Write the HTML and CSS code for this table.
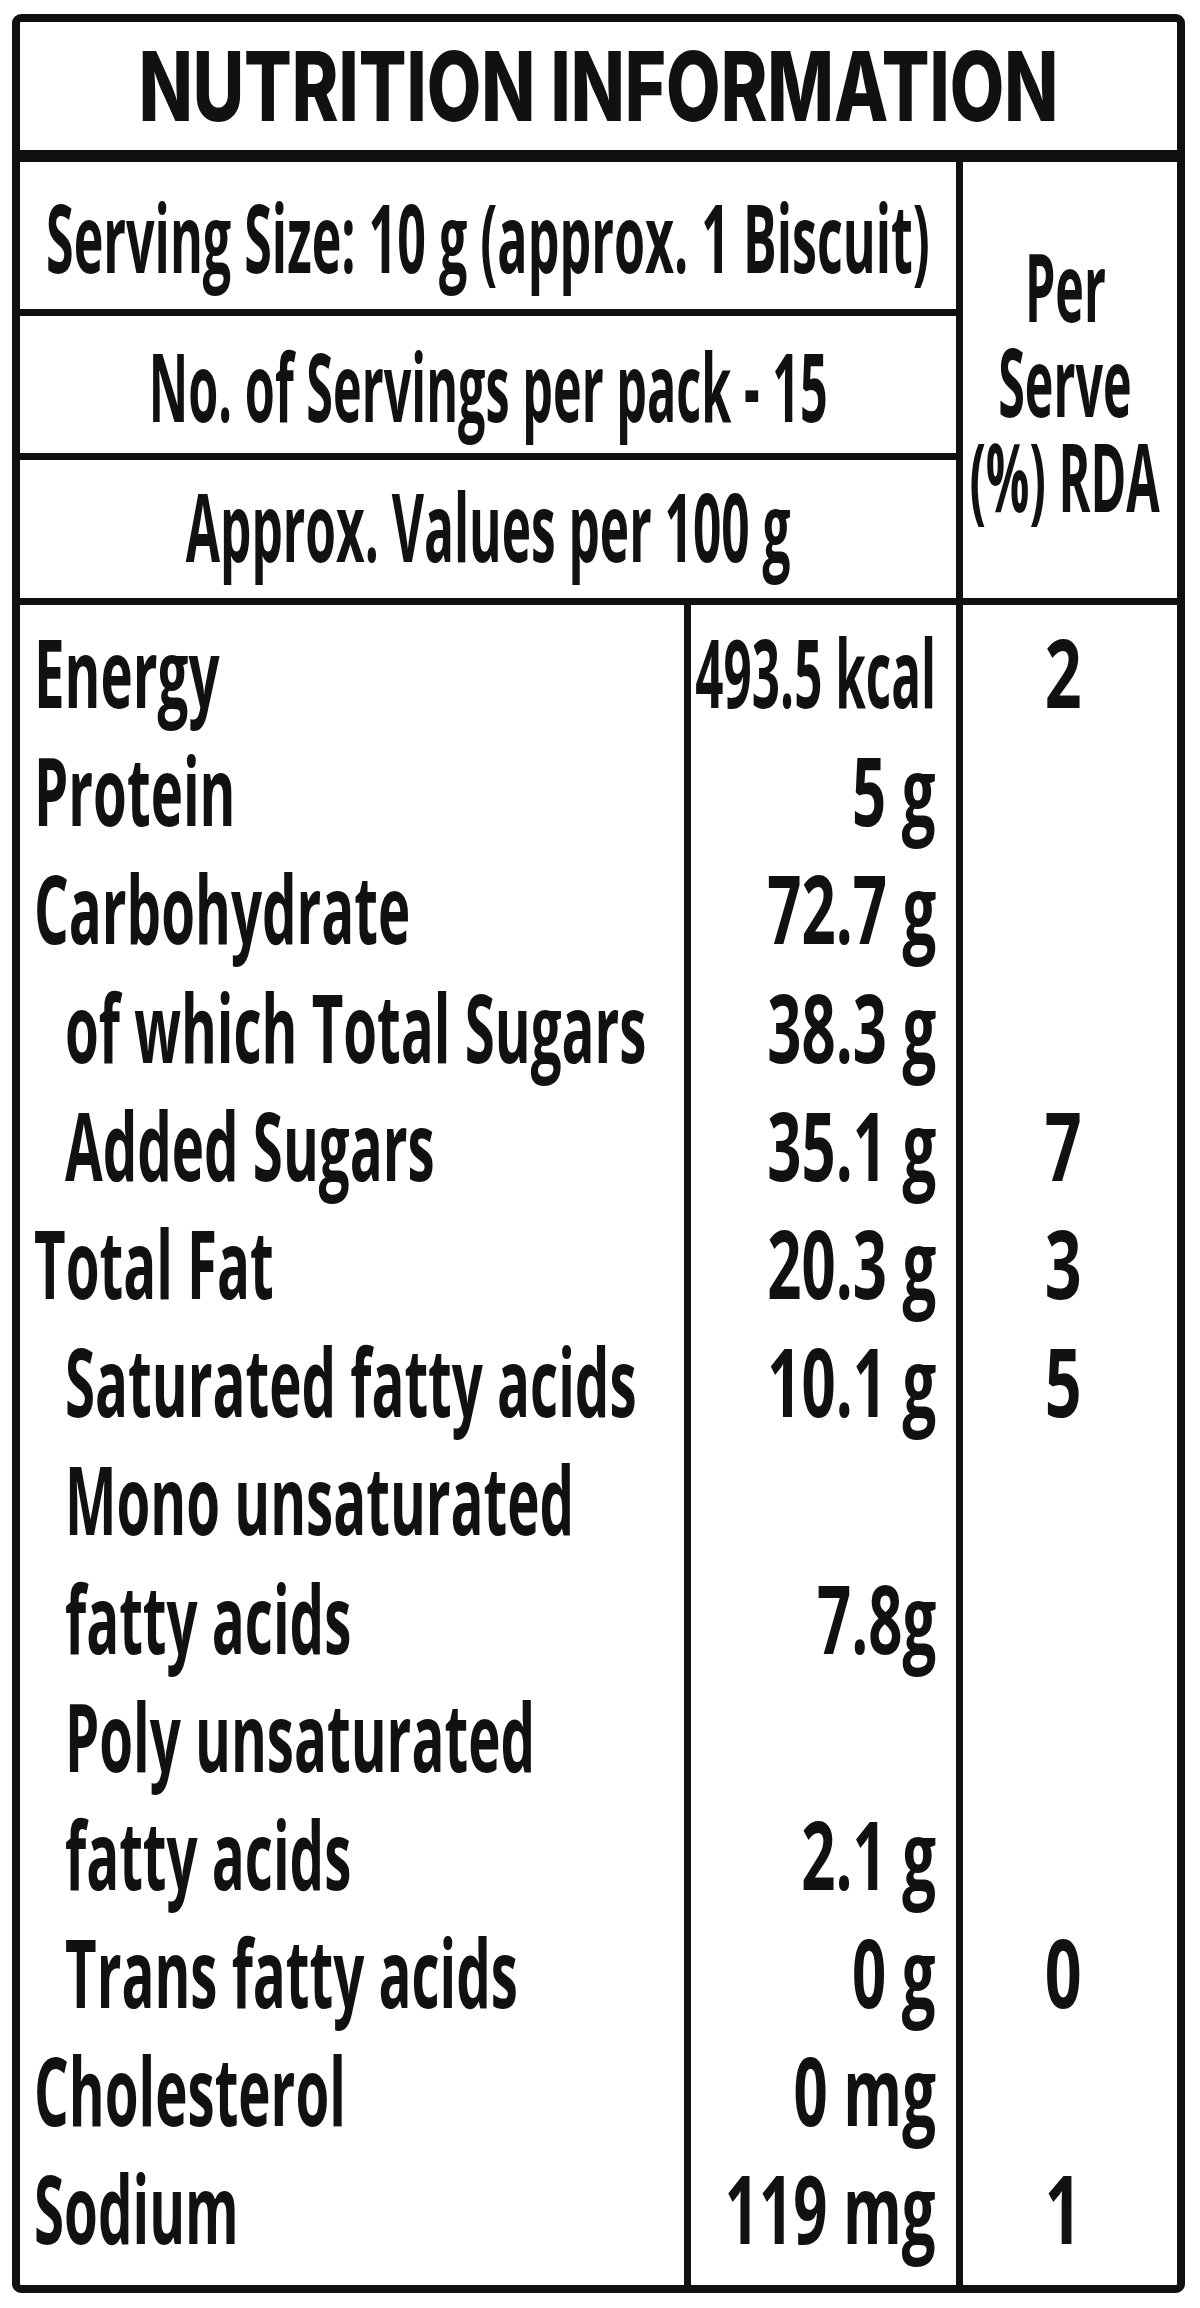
FILE: index.html
```html
<!DOCTYPE html>
<html lang="en">
<head>
<meta charset="utf-8">
<title>Nutrition Information</title>
<link rel="stylesheet" href="styles.css">
</head>
<body>
<div class="label">
  <div class="title"><span class="title-text">NUTRITION INFORMATION</span></div>
  <div class="head">
    <div class="head-left">
      <div class="hrow hrow-1"><span class="tx tx-h">Serving Size: 10 g (approx. 1 Biscuit)</span></div>
      <div class="hrow hrow-2"><span class="tx tx-h">No. of Servings per pack - 15</span></div>
      <div class="hrow hrow-3"><span class="tx tx-h">Approx. Values per 100 g</span></div>
    </div>
    <div class="head-right">
      <div class="rda-line"><span class="tx tx-rda-head">Per</span></div>
      <div class="rda-line"><span class="tx tx-rda-head">Serve</span></div>
      <div class="rda-line"><span class="tx tx-rda-head">(%) RDA</span></div>
    </div>
  </div>
  <div class="facts">
    <div class="c n"><span class="tx">Energy</span></div>
    <div class="c v"><span class="tx tx-tight">493.5 kcal</span></div>
    <div class="c p"><span class="tx">2</span></div>

    <div class="c n"><span class="tx">Protein</span></div>
    <div class="c v"><span class="tx">5 g</span></div>
    <div class="c p"></div>

    <div class="c n"><span class="tx">Carbohydrate</span></div>
    <div class="c v"><span class="tx">72.7 g</span></div>
    <div class="c p"></div>

    <div class="c n ind"><span class="tx">of which Total Sugars</span></div>
    <div class="c v"><span class="tx">38.3 g</span></div>
    <div class="c p"></div>

    <div class="c n ind"><span class="tx">Added Sugars</span></div>
    <div class="c v"><span class="tx">35.1 g</span></div>
    <div class="c p"><span class="tx">7</span></div>

    <div class="c n"><span class="tx">Total Fat</span></div>
    <div class="c v"><span class="tx">20.3 g</span></div>
    <div class="c p"><span class="tx">3</span></div>

    <div class="c n ind"><span class="tx">Saturated fatty acids</span></div>
    <div class="c v"><span class="tx">10.1 g</span></div>
    <div class="c p"><span class="tx">5</span></div>

    <div class="c n ind"><span class="tx">Mono unsaturated</span></div>
    <div class="c v"></div>
    <div class="c p"></div>

    <div class="c n ind"><span class="tx">fatty acids</span></div>
    <div class="c v"><span class="tx">7.8g</span></div>
    <div class="c p"></div>

    <div class="c n ind"><span class="tx">Poly unsaturated</span></div>
    <div class="c v"></div>
    <div class="c p"></div>

    <div class="c n ind"><span class="tx">fatty acids</span></div>
    <div class="c v"><span class="tx">2.1 g</span></div>
    <div class="c p"></div>

    <div class="c n ind"><span class="tx">Trans fatty acids</span></div>
    <div class="c v"><span class="tx">0 g</span></div>
    <div class="c p"><span class="tx">0</span></div>

    <div class="c n"><span class="tx">Cholesterol</span></div>
    <div class="c v"><span class="tx">0 mg</span></div>
    <div class="c p"></div>

    <div class="c n"><span class="tx">Sodium</span></div>
    <div class="c v"><span class="tx">119 mg</span></div>
    <div class="c p"><span class="tx">1</span></div>
  </div>
</div>
</body>
</html>
```

FILE: styles.css
```css
* {
  box-sizing: border-box;
  margin: 0;
  padding: 0;
}

html,
body {
  background: #ffffff;
}

body {
  padding: 14px 0 0 12px;
  font-family: "Open Sans", "Noto Sans", sans-serif;
  font-weight: 700;
  color: #111111;
}

.label {
  width: 1173px;
  height: 2279px;
  border: 8px solid #111111;
  border-radius: 9px;
  display: flex;
  flex-direction: column;
  overflow: hidden;
}

/* ---------- title ---------- */
.title {
  height: 140px;
  flex: none;
  border-bottom: 12px solid #111111;
  display: flex;
  align-items: center;
  justify-content: center;
}

.title-text {
  display: inline-block;
  font-family: "Inter", "Roboto", sans-serif;
  font-weight: 800;
  font-size: 96px;
  line-height: 1;
  white-space: nowrap;
  transform: scaleX(0.735);
  transform-origin: center center;
}

/* ---------- shared text ---------- */
.tx {
  display: inline-block;
  font-size: 95px;
  white-space: nowrap;
}

/* ---------- header block ---------- */
.head {
  height: 443px;
  flex: none;
  display: flex;
  border-bottom: 7px solid #111111;
}

.head-left {
  width: 936px;
  flex: none;
  display: flex;
  flex-direction: column;
}

.hrow {
  display: flex;
  align-items: center;
  justify-content: center;
  min-width: 0;
}

.hrow-1 {
  height: 154px;
  border-bottom: 7px solid #111111;
}

.hrow-2 {
  height: 144px;
  border-bottom: 7px solid #111111;
}

.hrow-3 {
  flex: 1;
  padding-bottom: 8px;
}

.tx-h {
  line-height: 1.2;
  transform-origin: center center;
}

.hrow-1 .tx-h {
  transform: scaleX(0.528);
}

.hrow-2 .tx-h {
  transform: scaleX(0.511);
}

.hrow-3 .tx-h {
  transform: scaleX(0.522);
}

.head-right {
  flex: 1;
  min-width: 0;
  border-left: 7px solid #111111;
  display: flex;
  flex-direction: column;
  justify-content: center;
  padding-right: 10px;
}

.rda-line {
  height: 95px;
  display: flex;
  justify-content: center;
  align-items: center;
  min-width: 0;
}

.tx-rda-head {
  line-height: 95px;
  transform: scaleX(0.51);
  transform-origin: center center;
}

/* ---------- facts grid ---------- */
.facts {
  flex: 1;
  display: grid;
  grid-template-columns: 664px 272px 221px;
  grid-template-rows: 125.2px repeat(12, 118.2px) 1fr;
}

.c {
  display: flex;
  align-items: flex-start;
  min-width: 0;
}

.facts > :nth-child(-n+3) {
  padding-top: 7px;
}

.c .tx {
  line-height: 118.2px;
}

.n {
  justify-content: flex-start;
  padding-left: 14px;
}

.n.ind {
  padding-left: 45px;
}

.n .tx {
  transform: scaleX(0.575);
  transform-origin: left center;
}

.v {
  border-left: 7px solid #111111;
  justify-content: flex-end;
  padding-right: 20px;
}

.v .tx {
  transform: scaleX(0.63);
  transform-origin: right center;
}

.v .tx-tight {
  transform: scaleX(0.52);
}

.p {
  border-left: 7px solid #111111;
  justify-content: center;
  padding-right: 14px;
}

.p .tx {
  transform: scaleX(0.68);
  transform-origin: center center;
}
```
